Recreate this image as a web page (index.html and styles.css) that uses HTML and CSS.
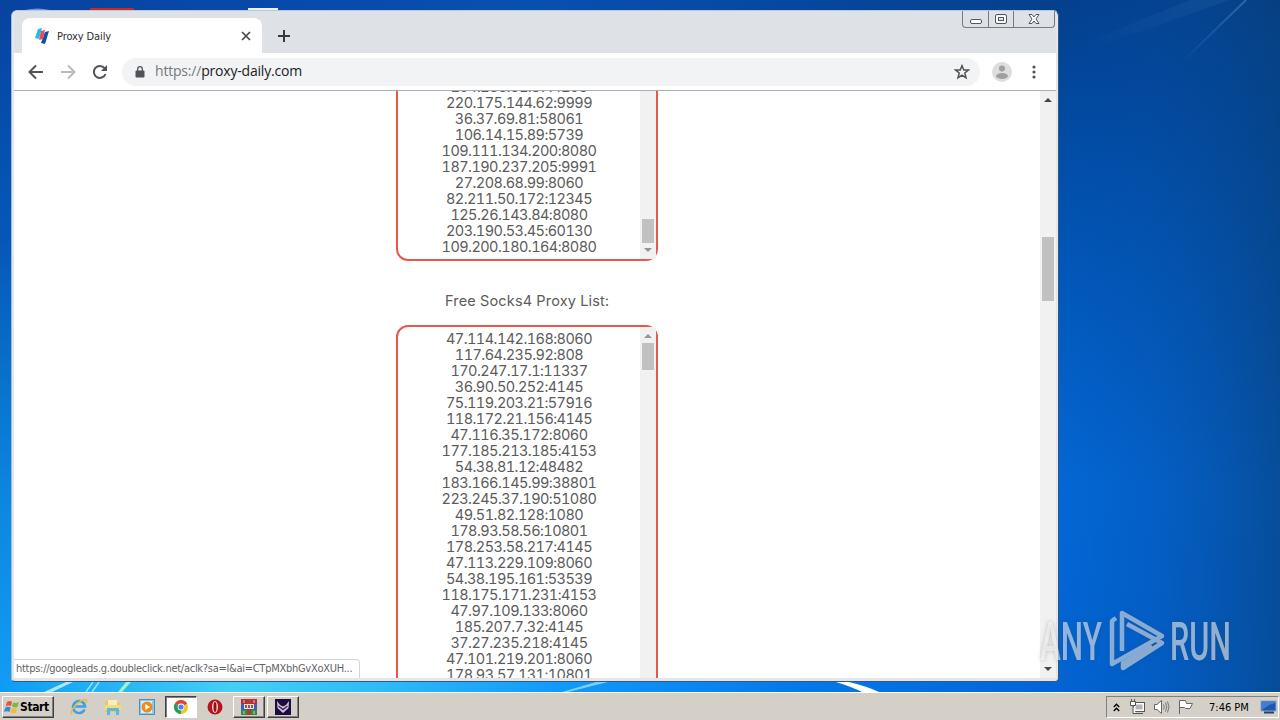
FILE: index.html
```html
<!DOCTYPE html>
<html lang="en">
<head>
    <meta charset="UTF-8">
    <title>Proxy Daily</title>
    <link rel="stylesheet" href="styles.css">
</head>
<body>
<div class="desktop">
    <!-- wallpaper -->
    <svg class="wallpaper" width="1280" height="692" viewBox="0 0 1280 692">
        <defs>
            <linearGradient id="leftSide" x1="0" y1="0" x2="0" y2="1">
                <stop offset="0" stop-color="#0843a0"/>
                <stop offset=".35" stop-color="#0558b8"/>
                <stop offset=".7" stop-color="#0b85dc"/>
                <stop offset="1" stop-color="#129df5"/>
            </linearGradient>
            <linearGradient id="rightSide" x1="0" y1="0" x2="0" y2="1">
                <stop offset="0" stop-color="#04408c"/>
                <stop offset=".12" stop-color="#02479c"/>
                <stop offset=".4" stop-color="#0258b9"/>
                <stop offset=".7" stop-color="#0467d4"/>
                <stop offset="1" stop-color="#0264d2"/>
            </linearGradient>
            <linearGradient id="rightShade">
                <stop offset="0" stop-color="#0048ab" stop-opacity="0"/>
                <stop offset=".4" stop-color="#064a9c" stop-opacity=".25"/>
                <stop offset="1" stop-color="#08407c" stop-opacity=".65"/>
            </linearGradient>
            <linearGradient id="topEdge">
                <stop offset="0" stop-color="#0843a0"/>
                <stop offset=".5" stop-color="#0850b0"/>
                <stop offset="1" stop-color="#04408c"/>
            </linearGradient>
            <linearGradient id="glow">
                <stop offset="0" stop-color="#0c9cf6"/>
                <stop offset=".12" stop-color="#28b8f4"/>
                <stop offset=".22" stop-color="#44d0f6"/>
                <stop offset=".36" stop-color="#2cbcf8"/>
                <stop offset=".52" stop-color="#109cfa"/>
                <stop offset=".76" stop-color="#0478ea"/>
                <stop offset="1" stop-color="#0264d6"/>
            </linearGradient>
            <linearGradient id="ray" x1="0" y1="1" x2="1" y2="0">
                <stop offset="0" stop-color="#5d9ad0" stop-opacity="0"/>
                <stop offset="1" stop-color="#5d9ad0" stop-opacity=".45"/>
            </linearGradient>
        </defs>
        <rect width="640" height="692" fill="url(#leftSide)"/>
        <rect x="300" width="980" height="692" fill="url(#rightSide)"/>
        <rect width="1059" height="12" fill="url(#topEdge)"/>
        <rect x="1058" width="222" height="692" fill="url(#rightShade)"/>
        <rect y="680" width="1059" height="12" fill="url(#glow)"/>
        <path d="M1182 62L1246 0" stroke="url(#ray)" stroke-width="2"/>
        <path d="M1080 45L1190 0H1230L1088 50Z" fill="url(#ray)" opacity=".25"/>
        <path d="M44 692L66 682H73L52 692Z" fill="#d9f5ff" opacity=".8"/>
        <path d="M86 692L93 682M92 692L99 682" stroke="#8fe4fa" stroke-width="1.5"/>
        <path d="M118 692L126 682H131L122 692Z" fill="#a4f0c8"/>
        <path d="M562 692L596 682H608L568 692Z" fill="#9addff" opacity=".8"/>
        <path d="M836 682H849Q866 686 879 692H862Q852 687 836 682Z" fill="#fff"/>
        <path d="M25 10Q37 7 50 10Z" fill="#7896c8"/>
        <rect x="90" y="8" width="44" height="3" fill="#c92a20"/>
        <rect x="248" y="8" width="30" height="3" fill="#e8f0fa"/>
    </svg>

    <div class="window">
        <div class="tab-strip">
            <div class="tab">
                <svg class="favicon" width="16" height="18" viewBox="0 0 16 18">
                    <path d="M4 2L8 1L5 12L1 11Z" fill="#20bce8"/>
                    <path d="M11 5L15 4L11 17L7 16Z" fill="#0a4fb4"/>
                    <path d="M7 4L11 3L9 12L5 13Z" fill="#ee4b4b"/>
                </svg>
                <span class="tab-title">Proxy Daily</span>
                <svg class="tab-close" width="10" height="10" viewBox="0 0 10 10"><path d="M1 1L9 9M9 1L1 9" stroke="#45494d" stroke-width="1.7"/></svg>
            </div>
            <svg class="new-tab" width="12" height="12" viewBox="0 0 12 12"><path d="M6 0V12M0 6H12" stroke="#36393e" stroke-width="2"/></svg>
            <div class="window-buttons">
                <span class="win-btn">
                    <svg width="14" height="14" viewBox="0 0 14 14"><rect x="1.5" y="7.5" width="11" height="4" rx="1.5" fill="#fff" stroke="#50555e"/></svg>
                </span>
                <span class="win-btn">
                    <svg width="14" height="14" viewBox="0 0 14 14"><rect x="1.500" y="2.500" width="11" height="9" rx="1.500" fill="#fff" stroke="#50555e"/><rect x="4.500" y="5.500" width="5" height="3" fill="#dee1e6" stroke="#50555e"/></svg>
                </span>
                <span class="win-btn wide">
                    <svg width="14" height="14" viewBox="0 0 14 14"><path d="M2 2.500H5L7 5L9 2.500H12L9 7L12 11.500H9L7 9L5 11.500H2L5 7Z" fill="#fff" stroke="#50555e"/></svg>
                </span>
            </div>
        </div>

        <div class="toolbar">
            <svg width="16" height="16" viewBox="0 0 16 16" fill="none" stroke="#505357" stroke-width="2"><path d="M15 8H2M8 1.500L1.500 8L8 14.500"/></svg>
            <svg width="16" height="16" viewBox="0 0 16 16" fill="none" stroke="#b9bbbe" stroke-width="2"><path d="M1 8H14M8 1.500L14.500 8L8 14.500"/></svg>
            <svg width="16" height="16" viewBox="0 0 16 16" fill="none" stroke="#505357" stroke-width="2"><path d="M13.500 10A6 6 0 1 1 12.600 4.200"/><path d="M15 1V7H9Z" fill="#505357" stroke="none"/></svg>
            <div class="address">
                <svg class="lock" width="10" height="12" viewBox="0 0 10 12"><rect x="0.500" y="4.500" width="9" height="7" rx="1" fill="#505357"/><path d="M2.700 5V3A2.300 2.300 0 0 1 7.300 3V5" fill="none" stroke="#505357" stroke-width="1.300"/></svg>
                <span class="url"><span class="scheme">https://</span>proxy-daily.com</span>
                <svg class="star" width="16" height="16" viewBox="0 0 16 16"><path d="M8 1.700L9.800 6H14.400L10.800 9L12 13.800L8 11.200L4 13.800L5.200 9L1.600 6H6.200Z" fill="none" stroke="#505357" stroke-width="1.500"/></svg>
            </div>
            <svg class="avatar" width="20" height="20" viewBox="0 0 20 20"><circle cx="10" cy="10" r="10" fill="#dedede"/><circle cx="10" cy="6.500" r="3" fill="#a0a0a0"/><ellipse cx="10" cy="14" rx="6" ry="3" fill="#a0a0a0"/></svg>
            <svg class="menu" width="4" height="14" viewBox="0 0 4 14" fill="#505357"><circle cx="2" cy="2" r="1.600"/><circle cx="2" cy="7" r="1.600"/><circle cx="2" cy="12" r="1.600"/></svg>
        </div>

        <div class="viewport">
            <div class="page">
                <div class="proxy-list list-end">
                    <div class="rows">
                        <div>104.238.51.37:4203</div>
                        <div>220.175.144.62:9999</div>
                        <div>36.37.69.81:58061</div>
                        <div>106.14.15.89:5739</div>
                        <div>109.111.134.200:8080</div>
                        <div>187.190.237.205:9991</div>
                        <div>27.208.68.99:8060</div>
                        <div>82.211.50.172:12345</div>
                        <div>125.26.143.84:8080</div>
                        <div>203.190.53.45:60130</div>
                        <div>109.200.180.164:8080</div>
                    </div>
                    <div class="scrollbar">
                        <span class="thumb"></span>
                        <svg class="arrow" width="8" height="4" viewBox="0 0 8 4"><path d="M0 0H8L4 4Z" fill="#949494"/></svg>
                    </div>
                </div>
                <p class="list-title">Free Socks4 Proxy List:</p>
                <div class="proxy-list list-start">
                    <div class="rows">
                        <div>47.114.142.168:8060</div>
                        <div>117.64.235.92:808</div>
                        <div>170.247.17.1:11337</div>
                        <div>36.90.50.252:4145</div>
                        <div>75.119.203.21:57916</div>
                        <div>118.172.21.156:4145</div>
                        <div>47.116.35.172:8060</div>
                        <div>177.185.213.185:4153</div>
                        <div>54.38.81.12:48482</div>
                        <div>183.166.145.99:38801</div>
                        <div>223.245.37.190:51080</div>
                        <div>49.51.82.128:1080</div>
                        <div>178.93.58.56:10801</div>
                        <div>178.253.58.217:4145</div>
                        <div>47.113.229.109:8060</div>
                        <div>54.38.195.161:53539</div>
                        <div>118.175.171.231:4153</div>
                        <div>47.97.109.133:8060</div>
                        <div>185.207.7.32:4145</div>
                        <div>37.27.235.218:4145</div>
                        <div>47.101.219.201:8060</div>
                        <div>178.93.57.131:10801</div>
                    </div>
                    <div class="scrollbar">
                        <svg class="arrow" width="8" height="4" viewBox="0 0 8 4"><path d="M0 4H8L4 0Z" fill="#949494"/></svg>
                        <span class="thumb"></span>
                    </div>
                </div>
            </div>
            <div class="page-scrollbar">
                <svg width="8" height="4" viewBox="0 0 8 4"><path d="M0 4H8L4 0Z" fill="#484848"/></svg>
                <span class="thumb"></span>
                <svg class="down" width="8" height="4" viewBox="0 0 8 4"><path d="M0 0H8L4 4Z" fill="#484848"/></svg>
            </div>
            <div class="status">https://googleads.g.doubleclick.net/aclk?sa=l&amp;ai=CTpMXbhGvXoXUH...</div>
        </div>
    </div>

    <svg class="watermark" width="200" height="70" viewBox="1036 606 200 70">
        <g class="mark-text">
            <text x="1040" y="660" textLength="62" lengthAdjust="spacingAndGlyphs">ANY</text>
            <text x="1170" y="660" textLength="61" lengthAdjust="spacingAndGlyphs">RUN</text>
        </g>
        <g class="mark-logo">
            <path d="M1116 618L1112 621V664L1162 636L1122 613V651"/>
            <path d="M1127 624L1162 643L1123 668V663L1152 646"/>
        </g>
    </svg>
</div>

<div class="taskbar">
    <div class="start">
        <svg width="16" height="16" viewBox="0 0 16 16">
            <path d="M3 3Q6 1 8 3L7 7Q4 6 1.500 7.500Z" fill="#e8582c"/>
            <path d="M9 3.500Q12 4.500 15 3L13.500 8Q11 9 8 7.500Z" fill="#7cb93c"/>
            <path d="M1.200 8.700Q4 7 6.700 8.500L5.500 13Q3 11.500 0 13Z" fill="#3a86d8"/>
            <path d="M7.700 9Q10 10 13 9L12 13.500Q9 15 6.500 13.500Z" fill="#f6bc28"/>
        </svg>
        <span>Start</span>
    </div>
    <div class="launch">
        <span class="task">
            <svg width="18" height="18" viewBox="0 0 18 18"><path d="M14.500 11.500A6 6 0 1 1 15 8.500H4" fill="none" stroke="#3ba3e4" stroke-width="2.600"/><path d="M2 16.500C-1 13 9 2 15.500 1.500Q17.500 2 16 5" fill="none" stroke="#e5bd45" stroke-width="1.500"/></svg>
        </span>
        <span class="task">
            <svg width="18" height="18" viewBox="0 0 18 18"><path d="M1 3H7L8 5H16V14H1Z" fill="#e6c865"/><path d="M4 2H13V8H4Z" fill="#f9edb8"/><path d="M1 7H17V12H1Z" fill="#f2da83"/><path d="M3 17V10H15V17H12V13H6V17Z" fill="#61b5e4"/></svg>
        </span>
        <span class="task">
            <svg width="18" height="18" viewBox="0 0 18 18"><rect x="1.500" y="1.500" width="15" height="15" fill="#8fc7ee" stroke="#4791cb"/><rect x="3" y="3" width="11" height="12" fill="#d8eefa"/><circle cx="9" cy="9" r="5.500" fill="#f08a1c"/><path d="M7.300 6L12 9L7.300 12Z" fill="#fff"/></svg>
        </span>
        <span class="task pressed">
            <svg width="16" height="16" viewBox="0 0 16 16"><circle cx="8" cy="8" r="7" fill="#f3c32c"/><path d="M8 8L1.900 4.500A7 7 0 0 1 14.100 4.500Z" fill="#db4437"/><path d="M8 8L1.900 4.500A7 7 0 0 0 8 15Z" fill="#279c58"/><circle cx="8" cy="8" r="3.400" fill="#fff"/><circle cx="8" cy="8" r="2.600" fill="#4285f4"/></svg>
        </span>
        <span class="task">
            <svg width="16" height="16" viewBox="0 0 16 16"><circle cx="8" cy="8" r="7.500" fill="#b5141a"/><ellipse cx="8" cy="8" rx="3" ry="6" fill="#f0d0ce"/><ellipse cx="8" cy="8" rx="1.500" ry="5" fill="#a00c12"/></svg>
        </span>
        <span class="task raised">
            <svg width="16" height="16" viewBox="0 0 16 16"><rect width="16" height="5" y="0" fill="#b62c3c"/><rect y="5" width="16" height="6" fill="#3a62b4"/><rect y="11" width="16" height="5" fill="#2e8d48"/><rect x="6" y="0" width="4" height="16" fill="#a8402c"/><rect x="3" y="5" width="10" height="5" fill="#eadfc8"/><path d="M5 6V9M8 6V9M11 6V9" stroke="#6e3040" stroke-width="1.500"/><path d="M3 1V4M13 1V4M3 12V15M13 12V15" stroke="#e3c6b0"/></svg>
        </span>
        <span class="task raised">
            <svg width="16" height="16" viewBox="0 0 16 16"><rect width="16" height="16" fill="#1d0d3c"/><path d="M2 2L5 6L8 7.500L11 6L14 2L13.500 9L8 14L2.500 9Z" fill="#d7c4de"/><path d="M3.500 7L8 10.500L12.500 7" fill="none" stroke="#3d2460" stroke-width="1.500"/></svg>
        </span>
    </div>
    <div class="tray">
        <svg class="chevrons" width="7" height="9" viewBox="0 0 7 9" fill="none" stroke="#000" stroke-width="1.400"><path d="M.8 4L3.500 1.200L6.200 4M.8 8L3.500 5.200L6.200 8"/></svg>
        <svg class="network" width="16" height="16" viewBox="0 0 16 16"><rect x="4.500" y="3.500" width="11" height="9" fill="#fff" stroke="#555"/><rect x="6.500" y="5.500" width="7" height="5" fill="#b4b4b4"/><path d="M6 14.500H14" stroke="#555"/><path d="M1.500 2.500H6.500V6.500H1.500ZM2.500 0V2M5.500 0V2M4 7V14.500H7" fill="#fff" stroke="#555"/></svg>
        <svg class="sound" width="17" height="16" viewBox="0 0 17 16"><path d="M1.500 5.500H4L8.500 1.500V14.500L4 10.500H1.500Z" fill="#fff" stroke="#666"/><path d="M10.500 5.500Q12 8 10.500 10.500M12.500 3.500Q15 8 12.500 12.500M14.500 2.500Q17.500 8 14.500 13.500" fill="none" stroke="#777"/></svg>
        <svg class="flag" width="17" height="16" viewBox="0 0 17 16"><path d="M2.500 1.500V15M2.500 1.500H8.500L9.500 4.500H15.500L13 9.500H8.500L7.500 8.500H2.500" fill="#fff" stroke="#666"/></svg>
        <span class="clock">7:46 PM</span>
        <svg class="show-desktop" width="17" height="14" viewBox="0 0 17 14"><rect x="1" y="1" width="15" height="10" fill="#1c55b4" stroke="#88a7cf"/><path d="M2 10L9 5L15 3V2H2Z" fill="#3d7fd4"/><path d="M4 12.500H14" stroke="#28415e" stroke-width="2"/></svg>
    </div>
</div>
</body>
</html>
```
FILE: styles.css
```css
* {
    box-sizing: border-box;
}

body {
    margin: 0;
    width: 1280px;
    height: 720px;
    overflow: hidden;
    display: flex;
    flex-direction: column;
    font-family: "DejaVu Sans Condensed", "DejaVu Sans", sans-serif;
    font-size: 11px;
}

svg {
    flex: none;
}

.desktop {
    position: relative;
    height: 692px;
}

.wallpaper {
    display: block;
}

/* browser window */
.window {
    position: absolute;
    left: 11px;
    top: 10px;
    width: 1048px;
    height: 672px;
    display: flex;
    flex-direction: column;
    padding: 0 2px 3px;
    background: #e4e6e9;
    border: 1px solid #33597f;
    border-top-color: #b9c8dc;
    border-left-color: #9cb9dc;
    border-radius: 6px 6px 4px 4px;
}

.tab-strip {
    height: 42px;
    display: flex;
    align-items: flex-end;
    background: #dee1e6;
    border-radius: 5px 5px 0 0;
}

.tab {
    width: 240px;
    height: 35px;
    margin-left: 8px;
    padding: 0 11px 0 12px;
    display: flex;
    align-items: center;
    background: #fff;
    border-radius: 8px 8px 0 0;
}

.tab-title {
    margin-left: 7px;
    padding-top: 1px;
    flex: 1;
    letter-spacing: -.1px;
    color: #2b2e31;
}

.new-tab {
    margin: 0 0 11px 16px;
}

.window-buttons {
    align-self: flex-start;
    display: flex;
    margin-left: auto;
    margin-right: 1px;
    border: 1px solid #777b82;
    border-top: none;
    border-radius: 0 0 4px 4px;
}

.win-btn {
    width: 25px;
    height: 16px;
    display: flex;
    align-items: center;
    justify-content: center;
}

.win-btn + .win-btn {
    border-left: 1px solid #777b82;
}

.win-btn.wide {
    width: 41px;
}

.toolbar {
    height: 38px;
    padding: 0 20px 0 14px;
    display: flex;
    align-items: center;
    gap: 16px;
    background: #fff;
    border-bottom: 1px solid #acaeb1;
}

.address {
    flex: 1;
    height: 28px;
    margin-left: -2px;
    margin-right: -4px;
    padding: 0 10px 0 13px;
    display: flex;
    align-items: center;
    background: #f1f3f4;
    border-radius: 14px;
}

.url {
    flex: 1;
    margin-left: 10px;
    padding-bottom: 2px;
    font-family: "Open Sans", sans-serif;
    font-size: 14px;
    letter-spacing: -.2px;
    color: #202124;
}

.scheme {
    color: #75797d;
}

.avatar {
    margin-right: 4px;
}

.viewport {
    position: relative;
    flex: 1;
    min-height: 0;
    display: flex;
    background: #fff;
    overflow: hidden;
}

.page {
    flex: 1;
    display: flex;
    flex-direction: column;
    align-items: center;
    font-family: Inter, "Liberation Sans", sans-serif;
    font-size: 14.5px;
    line-height: 16px;
    font-variant-numeric: tabular-nums;
    color: #5c5c5c;
}

.proxy-list {
    flex: none;
    width: 262px;
    display: flex;
    border: 2px solid #e8574a;
    border-radius: 12px;
    text-align: center;
}

.list-end {
    height: 170px;
    border-top: none;
    border-top-left-radius: 0;
    border-top-right-radius: 0;
}

.list-start {
    height: 420px;
}

.rows {
    flex: 1;
    display: flex;
    flex-direction: column;
    padding: 4px 0;
    letter-spacing: -.56px;
}

.list-end .rows {
    justify-content: flex-end;
}

.list-title {
    margin: 32px 0 16px;
    font-weight: 400;
    letter-spacing: .17px;
}

.scrollbar {
    width: 16px;
    display: flex;
    flex-direction: column;
    align-items: center;
    background: #f1f1f1;
}

.thumb {
    width: 12px;
    background: #c1c1c1;
}

.list-end .scrollbar {
    justify-content: flex-end;
    padding-bottom: 7px;
}

.list-end .thumb {
    height: 24px;
    margin-bottom: 5px;
}

.list-start .scrollbar {
    padding-top: 7px;
}

.list-start .thumb {
    height: 27px;
    margin-top: 5px;
}

.page-scrollbar {
    width: 16px;
    padding: 7px 0;
    display: flex;
    flex-direction: column;
    align-items: center;
    background: #f1f1f1;
}

.page-scrollbar .thumb {
    height: 64px;
    margin-top: 135px;
}

.page-scrollbar .down {
    margin-top: auto;
}

/* link preview over the page */
.status {
    position: absolute;
    left: 0;
    bottom: 0;
    width: 346px;
    height: 19px;
    padding-left: 2px;
    line-height: 18px;
    letter-spacing: -.27px;
    white-space: nowrap;
    color: #5f6368;
    background: #fff;
    border: 1px solid #d4d4d4;
    border-left: none;
    border-bottom: none;
    border-radius: 0 4px 0 0;
}

.watermark {
    position: absolute;
    left: 1036px;
    top: 606px;
    filter: drop-shadow(0 0 2px rgba(60, 60, 60, .5));
}

.mark-text {
    font-family: Roboto, sans-serif;
    font-size: 53px;
    font-weight: 500;
    fill: #fff;
    opacity: .55;
}

.mark-logo {
    fill: none;
    stroke: #fff;
    stroke-width: 4.5;
    stroke-linejoin: round;
    opacity: .5;
}

/* taskbar */
.taskbar {
    height: 28px;
    padding: 3px 1px 2px 2px;
    display: flex;
    background: #d4d0c8;
    border-top: 1px solid #fff;
}

.start,
.raised {
    border: 1px solid;
    border-color: #fff #404040 #404040 #fff;
    box-shadow: inset -1px -1px 0 #808080;
}

.start {
    width: 52px;
    display: flex;
    align-items: center;
    padding-left: 1px;
    font-weight: bold;
    font-size: 12px;
    letter-spacing: -.4px;
}

.launch {
    display: flex;
    gap: 2px;
    margin-left: 9px;
}

.task {
    width: 32px;
    display: flex;
    align-items: center;
    justify-content: center;
}

.pressed {
    background: #fff;
    border: 1px solid;
    border-color: #404040 #fff #fff #404040;
    box-shadow: inset 1px 1px 0 #808080;
}

.tray {
    width: 173px;
    margin-left: auto;
    padding: 0 1px 0 6px;
    display: flex;
    align-items: center;
    border: 1px solid;
    border-color: #808080 #fff #fff #808080;
}

.network {
    margin-left: 9px;
}

.sound {
    margin-left: 8px;
}

.flag {
    margin-left: 7px;
}

.clock {
    margin-left: 15px;
}

.show-desktop {
    margin-left: auto;
}
```
